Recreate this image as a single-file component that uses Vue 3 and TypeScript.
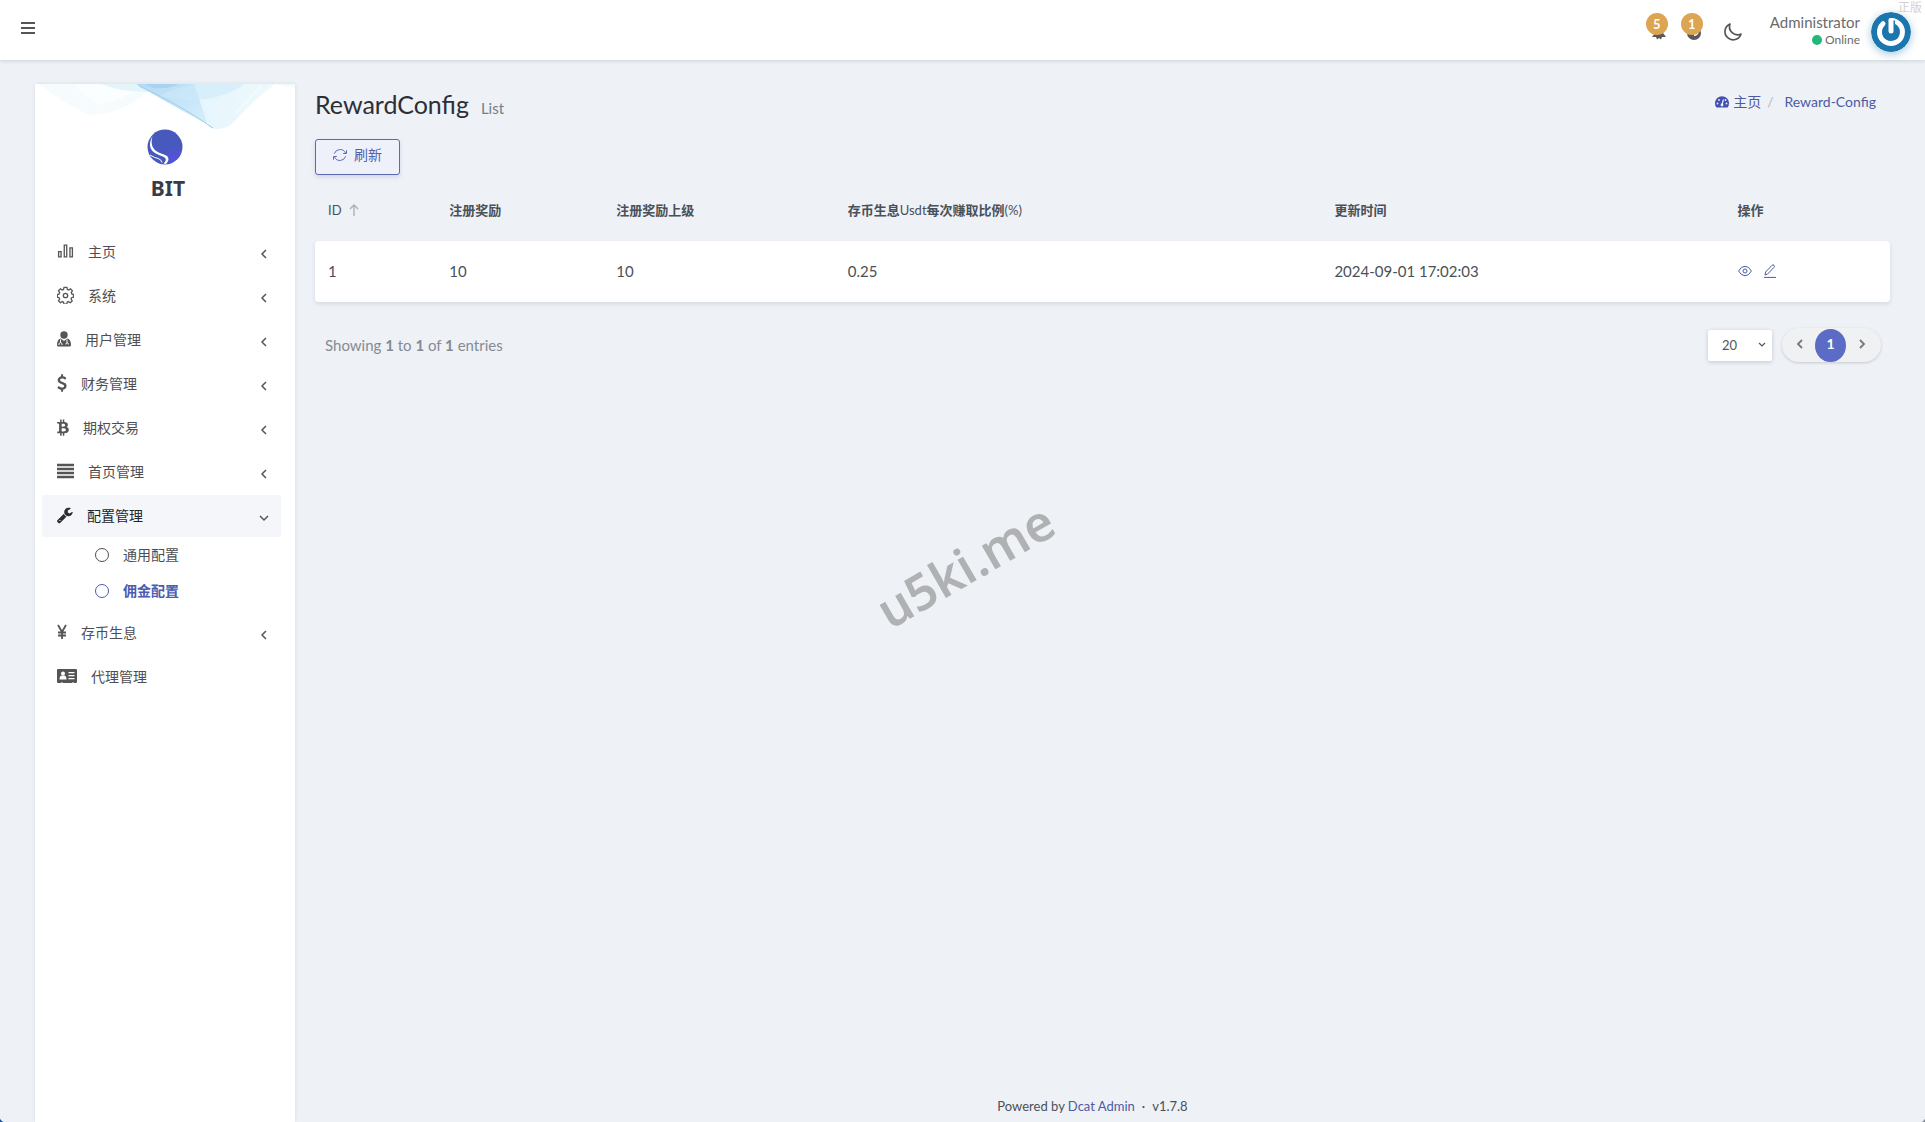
<script setup lang="ts">
import { ref } from 'vue'

interface MenuItem {
  label: string
  icon: string
  iconWidth: number
  arrow?: boolean
  open?: boolean
  children?: { label: string; active?: boolean }[]
}

interface Row {
  id: number
  reward: number
  parentReward: number
  rate: number
  updatedAt: string
}

const menu: MenuItem[] = [
  { label: '主页', icon: 'chart', iconWidth: 17, arrow: true },
  { label: '系统', icon: 'gear', iconWidth: 17, arrow: true },
  { label: '用户管理', icon: 'user', iconWidth: 14, arrow: true },
  { label: '财务管理', icon: 'dollar', iconWidth: 10, arrow: true },
  { label: '期权交易', icon: 'bitcoin', iconWidth: 12, arrow: true },
  { label: '首页管理', icon: 'bars', iconWidth: 17, arrow: true },
  {
    label: '配置管理',
    icon: 'wrench',
    iconWidth: 16,
    arrow: true,
    open: true,
    children: [{ label: '通用配置' }, { label: '佣金配置', active: true }],
  },
  { label: '存币生息', icon: 'yen', iconWidth: 10, arrow: true },
  { label: '代理管理', icon: 'card', iconWidth: 20 },
]

const rows: Row[] = [
  { id: 1, reward: 10, parentReward: 10, rate: 0.25, updatedAt: '2024-09-01 17:02:03' },
]

const perPage = ref('20')
</script>

<template>
  <div class="app">
    <header class="topbar">
      <button class="icon-button" type="button" aria-label="Menu">
        <svg width="16" height="14" viewBox="0 0 16 14"><path d="M1 2h14M1 7h14M1 12h14" stroke="#555" stroke-width="2" /></svg>
      </button>
      <div class="tools">
        <button class="icon-button notice" type="button" aria-label="Awards">
          <svg width="22" height="22" viewBox="0 0 22 22"><path d="M8 8h10l-1 4 3 4h-4l-1 2.500-2-1.500-2 1.500-1-2.500H6l3-4z" fill="#5a5a5e" /></svg>
          <span class="badge">5</span>
        </button>
        <button class="icon-button notice" type="button" aria-label="Messages">
          <svg width="22" height="22" viewBox="0 0 22 22"><circle cx="13" cy="12" r="7" fill="#5a5a5e" /><path d="M13 14q3 0 4-3" fill="none" stroke="#fff" stroke-width="2" /></svg>
          <span class="badge">1</span>
        </button>
        <button class="icon-button moon" type="button" aria-label="Dark mode">
          <svg width="20" height="20" viewBox="0 0 20 20"><path d="M7 2a8.200 8.200 0 1 0 11 10A8 8 0 0 1 7 2z" fill="none" stroke="#555" stroke-width="1.700" stroke-linejoin="round" /></svg>
        </button>
        <div class="user">
          <span class="user-name">Administrator</span>
          <span class="user-state"><i class="dot"></i>Online</span>
        </div>
        <svg class="avatar" width="40" height="40" viewBox="0 0 40 40">
          <circle cx="20" cy="20" r="20" fill="#1a76ad" />
          <path d="M20 8.500A11.500 11.500 0 1 1 12 11.700" fill="none" stroke="#fff" stroke-width="5" stroke-linecap="round" />
          <path d="M20 8.500V19" stroke="#1a76ad" stroke-width="8" />
          <path d="M20 8.500V19" stroke="#fff" stroke-width="5" stroke-linecap="round" />
        </svg>
      </div>
      <span class="stamp">正版</span>
    </header>

    <div class="body">
      <aside class="sidebar">
        <svg class="wave" viewBox="0 0 260 45" preserveAspectRatio="none">
          <defs>
            <linearGradient id="fold" x1="0" y1="0" x2="1" y2="1">
              <stop offset="0" stop-color="#b2daf5" />
              <stop offset="1" stop-color="#dcf1fc" />
            </linearGradient>
            <linearGradient id="veil" x1="0" y1="0" x2="1" y2="0">
              <stop offset="0" stop-color="#e4f5fc" />
              <stop offset="1" stop-color="#eef9fd" />
            </linearGradient>
          </defs>
          <path d="M4 0H120Q92 30 55 31 32 22 4 0z" fill="#f6fcfe" />
          <path d="M40 0h70q-25 18-46 21Q50 14 40 0z" fill="#fbfeff" />
          <path d="M66 0h60L112 8Q86 8 66 0z" fill="#e4f5fa" />
          <path d="M150 0h90q-18 14-35 31-10 14-22 14-12 1-33-45z" fill="url(#veil)" />
          <path d="M101 0h58q9 26 14 42 4 3 8 3Q134 20 101 0z" fill="url(#fold)" />
          <path d="M110 0h34q-8 5-26 4z" fill="#9dccec" opacity=".6" />
          <path d="M104 2q40 18 74 42" fill="none" stroke="#9fcdea" />
          <path d="M124 12q50 12 86-12h-50q-20 4-36 12z" fill="#cdeafa" opacity=".6" />
          <path d="M201 28q10-8 24-26" fill="none" stroke="#fff" />
          <path d="M240 0h20v4z" fill="#f0fbfd" />
        </svg>
        <a class="brand" href="#">
          <svg width="36" height="36" viewBox="0 0 36 36">
            <defs>
              <radialGradient id="orb" cx=".75" cy=".8" r=".35"><stop offset="0" stop-color="#5550e0" /><stop offset="1" stop-color="#4859bd" /></radialGradient>
            </defs>
            <circle cx="18" cy="18" r="17.500" fill="url(#orb)" />
            <path d="M5.500 7C1 15 3 21 8 24c5 3 9 3 10.500 5.500 .8 1.500.2 3-2 5l2.500.5c4-4 3-8-2-9.500C10 23 2 20 5.500 7z" fill="#fff" />
            <path d="M3 26q5 3 8 3.500t4 4" fill="none" stroke="#fff" />
          </svg>
          <span>BIT</span>
        </a>
        <nav class="menu">
          <div v-for="item in menu" :key="item.label" class="menu-group">
            <a href="#" class="menu-item" :class="{ open: item.open }">
              <svg v-if="item.icon === 'chart'" :width="item.iconWidth" height="18" viewBox="0 0 18 18" class="line"><path d="M1.700 9.700h2.600v5.600H1.700zM7.700 2.700h2.600v12.600H7.700zM13.700 5.700h2.600v9.600h-2.600z" /></svg>
              <svg v-else-if="item.icon === 'gear'" :width="item.iconWidth" height="18" viewBox="0 0 18 18" class="line"><path d="M7.500 1h3l.5 2.200 1.300.5 2-1.200 2 2.100-1.200 1.900.6 1.400 1.800.6v2.800l-2 .6-.6 1.300 1.200 2-2 2-2-1.200-1.300.6-.5 2h-2.900l-.5-2-1.300-.6-2 1.200-2-2 1.200-2-.6-1.300-1.800-.6V8.500l1.900-.6.5-1.400-1.200-1.900 2-2.100 2 1.200 1.300-.5z" /><circle cx="9" cy="9.500" r="2.300" /></svg>
              <svg v-else-if="item.icon === 'user'" :width="item.iconWidth" height="18" viewBox="0 0 14 18"><circle cx="7" cy="5" r="3.700" /><path d="M3.500 8.500 7 11l3.500-2.500Q14 9.500 14 15q0 1.500-1.500 1.500h-11Q0 16.500 0 15q0-5.500 3.500-6.500z" /><path d="M3.500 9.500v3M2 15v-1.500q1.500-2 3 0V15M10 9.500v3M9 14.500q0-2 1-2t1.500 2" fill="none" stroke="#fff" /></svg>
              <svg v-else-if="item.icon === 'dollar'" :width="item.iconWidth" height="18" viewBox="384 0 1024 1792"><path d="M1362 1185q0 153-99.500 263.500t-258.500 136.500v175q0 14-9 23t-23 9h-135q-13 0-22.500-9.500t-9.500-22.500v-175q-66-9-127.500-31t-101.500-44.500-74-48-46.500-37.500-17.500-18q-17-21-2-41l103-135q7-10 23-12 15-2 24 9l2 2q113 99 243 125 37 8 74 8 81 0 142.500-43t61.500-122q0-28-15-53t-33.500-42-58.500-37.500-66-32-80-32.500q-39-16-61.500-25t-61.500-26.500-62.500-31-56.500-35.500-53.500-42.500-43.500-49-35.500-58-21-66.500-8.500-78q0-138 98-242t255-134v-180q0-13 9.500-22.500t22.500-9.500h135q14 0 23 9t9 23v176q57 6 110.500 23t87 33.500 63.500 37.500 39 29 15 14q17 18 5 38l-81 146q-8 15-23 16-14 3-27-7-3-3-14.500-12t-39-26.500-58.500-32-74.500-26-85.500-11.500q-95 0-155 43t-60 111q0 26 8.500 48t29.500 41.500 39.500 33 56 31 60.500 27 70 27.500q53 20 81 31.500t76 35 75.500 42.500 62 50 53 63.500 31.500 76.500 13 94z" /></svg>
              <svg v-else-if="item.icon === 'bitcoin'" :width="item.iconWidth" height="18" viewBox="40 0 1240 1792"><path d="M1167 640q18 182-131 258 117 28 175 103t45 214q-7 71-32.500 125t-64.500 89-97 58.500-121.500 34.500-145.500 15v255h-154v-251q-80 0-122-1v252h-154v-255q-18 0-54-.5t-55-.5h-200l31-183h111q50 0 58-51v-402h16q-6-1-16-1v-287q-13-68-89-68h-111v-164l212 1q64 0 97-1v-252h154v247q82-2 122-2v-245h154v252q79 7 140 22.500t113 45 82.500 78 36.500 114.500zm-215 545q0-36-15-64t-37-46-57.500-30.500-65.500-18.500-74-9-69-3-64.500 1-47.500 1v338q8 0 37 .5t48 .5 53-1.500 58.500-4 57-8.500 55.500-14 47.500-21 39.500-30 24.500-40 9.500-51zm-71-476q0-33-12.500-58.500t-30.500-42-48-28-55-16.500-61.500-8-58-2.500-54 1-39.500.5v307q5 0 34.500.5t46.500 0 50-2 55-5.500 51.500-11 48.500-18.500 37-27 27-38.500 9-51z" /></svg>
              <svg v-else-if="item.icon === 'bars'" :width="item.iconWidth" height="18" viewBox="0 0 17 18"><path d="M0 2h17v2H0zM0 6h17v2H0zM0 10h17v2H0zM0 14h17v2H0z" stroke="#555" stroke-width=".5" /></svg>
              <svg v-else-if="item.icon === 'wrench'" :width="item.iconWidth" height="18" viewBox="80 0 1680 1792"><path d="M448 1472q0-26-19-45t-45-19-45 19-19 45 19 45 45 19 45-19 19-45zm644-420l-682 682q-37 37-90 37-52 0-91-37l-106-108q-38-36-38-90 0-53 38-91l681-681q39 98 114.500 173.500t173.500 114.500zm634-435q0 39-23 106-47 134-164.500 217.500t-258.500 83.500q-185 0-316.500-131.500t-131.500-316.500 131.500-316.500 316.500-131.500q58 0 121.500 16.500t107.500 46.500q16 11 16 28t-16 28l-293 169v224l193 107q5-3 79-48.500t135.500-81 70.500-35.500q15 0 23.500 10t8.500 25z" /></svg>
              <svg v-else-if="item.icon === 'yen'" :width="item.iconWidth" height="18" viewBox="0 0 10 18"><path d="M1 2l4 7 4-7M5 9v7M1 9.500h8M1 12.500h8" fill="none" stroke="#555" stroke-width="1.800" /></svg>
              <svg v-else :width="item.iconWidth" height="18" viewBox="0 0 20 18"><path d="M1 2h18q1 0 1 1v12q0 1-1 1h-2l-1-1-1 1H6l-1-1-1 1H1q-1 0-1-1V3q0-1 1-1z" /><circle cx="6" cy="6.500" r="2" fill="#fff" /><path d="M2.500 12.500Q2.500 9 4.500 8.500h3q2 .5 2 4zM11.500 5h6v1.200h-6zM11.500 8h6v1.200h-6zM11.500 11h6v1.200h-6z" fill="#fff" /></svg>
              <span class="menu-label">{{ item.label }}</span>
              <svg v-if="item.arrow" class="arrow" width="10" height="10" viewBox="0 0 10 10"><path :d="item.open ? 'M1 3l4 4 4-4' : 'M7 1L3 5l4 4'" /></svg>
            </a>
            <a v-for="child in item.children ?? []" :key="child.label" href="#" class="sub-item" :class="{ active: child.active }">
              <i class="ring"></i>{{ child.label }}
            </a>
          </div>
        </nav>
      </aside>

      <main class="content">
        <div class="heading">
          <h1>RewardConfig<small>List</small></h1>
          <nav class="crumbs">
            <a href="#">
              <svg width="14" height="14" viewBox="0 0 14 14"><path d="M1.500 12.500a7 7 0 1 1 11 0z" fill="#4150b0" /><path d="M7 9.500l1.500-5" stroke="#eef1f6" stroke-width="1.200" /><circle cx="7" cy="10" r="1.400" fill="#eef1f6" /><g fill="#eef1f6"><circle cx="2.500" cy="8.500" r=".9" /><circle cx="4" cy="5" r=".9" /><circle cx="11.500" cy="8.500" r=".9" /><circle cx="10.500" cy="5" r=".9" /></g></svg>
              主页
            </a>
            <span class="slash">/</span>
            <a href="#">Reward-Config</a>
          </nav>
        </div>

        <button class="refresh" type="button">
          <svg width="14" height="14" viewBox="0 0 14 14"><path d="M1.300 5.800A6 6 0 0 1 12.500 5M13.500 2.200V5.500h-3.300M12.700 8.200A6 6 0 0 1 1.500 9M.5 11.800V8.500h3.300" fill="none" stroke="#5c6bc0" /></svg>
          刷新
        </button>

        <table class="grid">
          <colgroup>
            <col class="c-id" /><col class="c-reward" /><col class="c-parent" /><col class="c-rate" /><col class="c-time" /><col class="c-action" />
          </colgroup>
          <thead>
            <tr>
              <th>
                <span class="latin">ID</span>
                <svg class="sort" width="10" height="12" viewBox="0 0 10 12"><path d="M5 12V1M1 5l4-4 4 4" fill="none" stroke="#a9b0bb" stroke-width="1.300" /></svg>
              </th>
              <th>注册奖励</th>
              <th>注册奖励上级</th>
              <th>存币生息<span class="latin">Usdt</span>每次赚取比例<span class="latin">(%)</span></th>
              <th>更新时间</th>
              <th>操作</th>
            </tr>
          </thead>
          <tbody>
            <tr v-for="row in rows" :key="row.id">
              <td>{{ row.id }}</td>
              <td>{{ row.reward }}</td>
              <td>{{ row.parentReward }}</td>
              <td>{{ row.rate }}</td>
              <td>{{ row.updatedAt }}</td>
              <td>
                <div class="actions">
                  <a href="#" aria-label="View"><svg width="14" height="14" viewBox="0 0 14 14"><path d="M.6 7Q3 2.300 7 2.300T13.400 7Q11 11.700 7 11.700T.6 7z" /><circle cx="7" cy="7" r="2" /></svg></a>
                  <a href="#" aria-label="Edit"><svg width="14" height="14" viewBox="0 0 14 14"><path d="M2 11l.6-3L9 1.300q1-1 2 0t0 2L4.700 10zM1 13.400h12" /></svg></a>
                </div>
              </td>
            </tr>
          </tbody>
        </table>

        <div class="table-foot">
          <p>Showing <b>1</b> to <b>1</b> of <b>1</b> entries</p>
          <div class="pages">
            <select v-model="perPage" aria-label="Rows per page">
              <option>10</option>
              <option>20</option>
              <option>50</option>
            </select>
            <div class="pager">
              <button type="button" aria-label="Previous"><svg width="8" height="10" viewBox="0 0 8 10"><path d="M6 1L2 5l4 4" /></svg></button>
              <button type="button" class="current">1</button>
              <button type="button" aria-label="Next"><svg width="8" height="10" viewBox="0 0 8 10"><path d="M2 1l4 4-4 4" /></svg></button>
            </div>
          </div>
        </div>

        <footer class="footer">Powered by <a href="#">Dcat Admin</a><span class="sep">·</span>v1.7.8</footer>
      </main>
    </div>

    <span class="watermark">u5ki.me</span>
    <i class="corner left"></i>
    <i class="corner right"></i>
  </div>
</template>

<style>
body {
  margin: 0;
  background: #eef1f6;
}
</style>

<style scoped>
.app {
  position: relative;
  display: flex;
  flex-direction: column;
  min-height: 100vh;
  overflow: hidden;
  color: #4a5058;
  font: 14px/20px Lato, "Noto Sans CJK SC", sans-serif;
}

*,
*::before,
*::after {
  box-sizing: border-box;
}

a {
  color: #4c5ba5;
  text-decoration: none;
}

button {
  font: inherit;
  cursor: pointer;
}

svg {
  flex: none;
}

.topbar {
  position: relative;
  display: flex;
  align-items: center;
  justify-content: space-between;
  height: 60px;
  padding: 0 14px 0 20px;
  background: #fff;
  box-shadow: 0 1px 4px rgba(40, 50, 80, 0.16);
}

.icon-button {
  display: flex;
  padding: 0;
  border: 0;
  background: none;
}

.topbar > .icon-button {
  padding-bottom: 4px;
}

.tools {
  display: flex;
  align-items: center;
  padding-top: 4px;
}

.notice {
  position: relative;
  width: 35px;
}

.badge {
  position: absolute;
  top: -8px;
  left: 0;
  width: 22px;
  height: 22px;
  border-radius: 50%;
  background: #dda451;
  color: #fff;
  font-size: 13px;
  font-weight: 700;
  line-height: 22px;
  text-align: center;
}

.moon {
  margin: 0 27px 0 7px;
}

.user {
  display: flex;
  flex-direction: column;
  align-items: flex-end;
  margin-right: 11px;
  padding-bottom: 2px;
  color: #6a6a6a;
  line-height: 18px;
}

.user-name {
  font-size: 15px;
}

.user-state {
  display: flex;
  align-items: center;
  gap: 3px;
  font-size: 12px;
}

.dot {
  width: 10px;
  height: 10px;
  border-radius: 50%;
  background: #21b978;
}

.avatar {
  border-radius: 50%;
  box-shadow: 0 2px 8px rgba(26, 118, 173, 0.4);
}

.stamp {
  position: absolute;
  top: 0;
  right: 3px;
  color: #d6d0d2;
  font-size: 12px;
  line-height: 16px;
}

.body {
  display: flex;
  flex: 1;
  gap: 20px;
  padding: 24px 35px 0;
}

.sidebar {
  flex: none;
  width: 260px;
  background: #fff;
  box-shadow: 0 0 4px rgba(40, 50, 80, 0.1);
}

.wave {
  display: block;
  width: 100%;
  height: 45px;
}

.brand {
  display: flex;
  flex-direction: column;
  align-items: center;
  gap: 9px;
  color: #3a3b45;
  font: 700 21px/28px "Noto Sans", sans-serif;
}

.brand svg {
  margin-right: 1px;
}

.brand span {
  padding-left: 6px;
}

.menu {
  padding: 29px 14px 0 7px;
}

.menu-item {
  display: flex;
  align-items: center;
  height: 42px;
  margin-bottom: 2px;
  padding: 0 12px 0 15px;
  color: #4e4e52;
  fill: #555;
}

.menu-item > svg:first-child {
  margin-bottom: 3px;
}

.menu-item .line {
  fill: none;
  stroke: #555;
  stroke-width: 1.4;
}

.menu-label {
  margin-left: 14px;
}

.menu-item.open {
  background: #f5f6fa;
  color: #22252b;
  fill: #2c2c30;
}

.arrow {
  margin: 3px 0 0 auto;
  fill: none;
  stroke: #555;
  stroke-width: 1.5;
}

.sub-item {
  display: flex;
  align-items: center;
  gap: 14px;
  height: 36px;
  padding-left: 53px;
  color: #4e4e52;
}

.menu-item + .sub-item {
  margin-top: -2px;
}

.sub-item:last-child {
  margin-bottom: 3px;
}

.sub-item.active {
  color: #4c5bb0;
  font-weight: 700;
}

.ring {
  width: 14px;
  height: 14px;
  border: 1px solid currentColor;
  border-radius: 50%;
}

.content {
  display: flex;
  flex: 1;
  flex-direction: column;
  align-items: flex-start;
  min-width: 0;
}

.heading {
  display: flex;
  align-items: flex-start;
  justify-content: space-between;
  width: 100%;
  height: 55px;
  padding-right: 14px;
}

h1 {
  margin: 0;
  color: #2c2f36;
  font-size: 25px;
  font-weight: 400;
  line-height: 40px;
}

small {
  margin-left: 12px;
  color: #777d86;
  font-size: 15px;
}

.crumbs,
.crumbs a {
  display: flex;
  align-items: center;
  gap: 4px;
}

.crumbs {
  padding-top: 8px;
}

.slash {
  margin: 0 7px 0 2px;
  color: #b5b9c0;
}

.refresh {
  display: flex;
  align-items: center;
  justify-content: center;
  gap: 7px;
  width: 85px;
  height: 36px;
  padding: 0 0 4px;
  border: 1px solid #5c6bb0;
  border-radius: 3px;
  background: #eef1fa;
  box-shadow: 0 2px 4px rgba(92, 107, 192, 0.2);
  color: #5361ad;
}

.grid {
  width: 100%;
  margin-top: 4px;
  border-collapse: separate;
  border-spacing: 0;
  table-layout: fixed;
}

.c-id { width: 7.7%; }
.c-reward { width: 10.6%; }
.c-parent { width: 14.7%; }
.c-rate { width: 30.9%; }
.c-time { width: 25.6%; }
.c-action { width: 10.5%; }

th {
  height: 62px;
  padding: 0 13px;
  font-size: 13px;
  font-weight: 700;
  text-align: left;
}

.latin {
  font-weight: 400;
}

.sort {
  margin-left: 7px;
  vertical-align: -1px;
}

tbody {
  border-radius: 4px;
  box-shadow: 0 2px 4px rgba(40, 50, 80, 0.12);
}

td {
  height: 61px;
  padding: 0 13px 2px;
  background: #fff;
  font-size: 15px;
}

td:first-child {
  border-radius: 4px 0 0 4px;
}

td:last-child {
  border-radius: 0 4px 4px 0;
}

.actions {
  display: flex;
  gap: 11px;
  fill: none;
  stroke: #4c5ba5;
}

.actions a {
  display: flex;
}

.table-foot {
  display: flex;
  align-items: center;
  justify-content: space-between;
  width: 100%;
  margin-top: 26px;
  padding: 0 9px 0 10px;
}

p {
  margin: 0;
  color: #868b93;
  font-size: 15px;
}

.pages {
  display: flex;
  align-items: center;
  gap: 10px;
}

select {
  width: 64px;
  height: 31px;
  padding: 0 14px;
  border: 0;
  border-radius: 2px;
  appearance: none;
  background: #fff url("data:image/svg+xml,%3Csvg xmlns='http://www.w3.org/2000/svg' width='8' height='6'%3E%3Cpath d='M1 1l3 3 3-3' fill='none' stroke='%23555' stroke-width='1.2'/%3E%3C/svg%3E") no-repeat right 6px center;
  box-shadow: 0 1px 4px rgba(40, 50, 80, 0.22);
  color: #555;
  font: 13px/20px Lato, sans-serif;
}

.pager {
  display: flex;
  align-items: center;
  height: 34px;
  padding: 0 4px 0 2px;
  border-radius: 17px;
  background: #f0f1f3;
  box-shadow: 0 1px 3px rgba(40, 50, 80, 0.2);
}

.pager button {
  width: 31px;
  height: 33px;
  padding: 0 0 2px;
  border: 0;
  background: none;
}

.pager .current {
  border-radius: 50%;
  background: #5c6bc6;
  color: #fff;
  font-weight: 700;
}

.pager path {
  fill: none;
  stroke: #777;
  stroke-width: 1.8;
}

.footer {
  align-self: center;
  margin-top: auto;
  padding: 0 20px 6px 0;
  font-size: 13px;
}

.sep {
  margin: 0 7px;
}

.watermark {
  position: absolute;
  top: 50%;
  left: 50%;
  margin-top: 4px;
  margin-left: 2px;
  color: #b0b1b3;
  font: 600 50px/60px "Noto Sans", sans-serif;
  transform: translate(-50%, -50%) rotate(-30deg);
  pointer-events: none;
}

.corner {
  position: absolute;
  bottom: 0;
  width: 6px;
  height: 6px;
}

.corner.left {
  left: 0;
  background: radial-gradient(circle at 100% 0, transparent 6px, #1d4f8c 7px);
}

.corner.right {
  right: 0;
  background: radial-gradient(circle at 0 0, transparent 6px, #7d8b98 7px);
}
</style>
